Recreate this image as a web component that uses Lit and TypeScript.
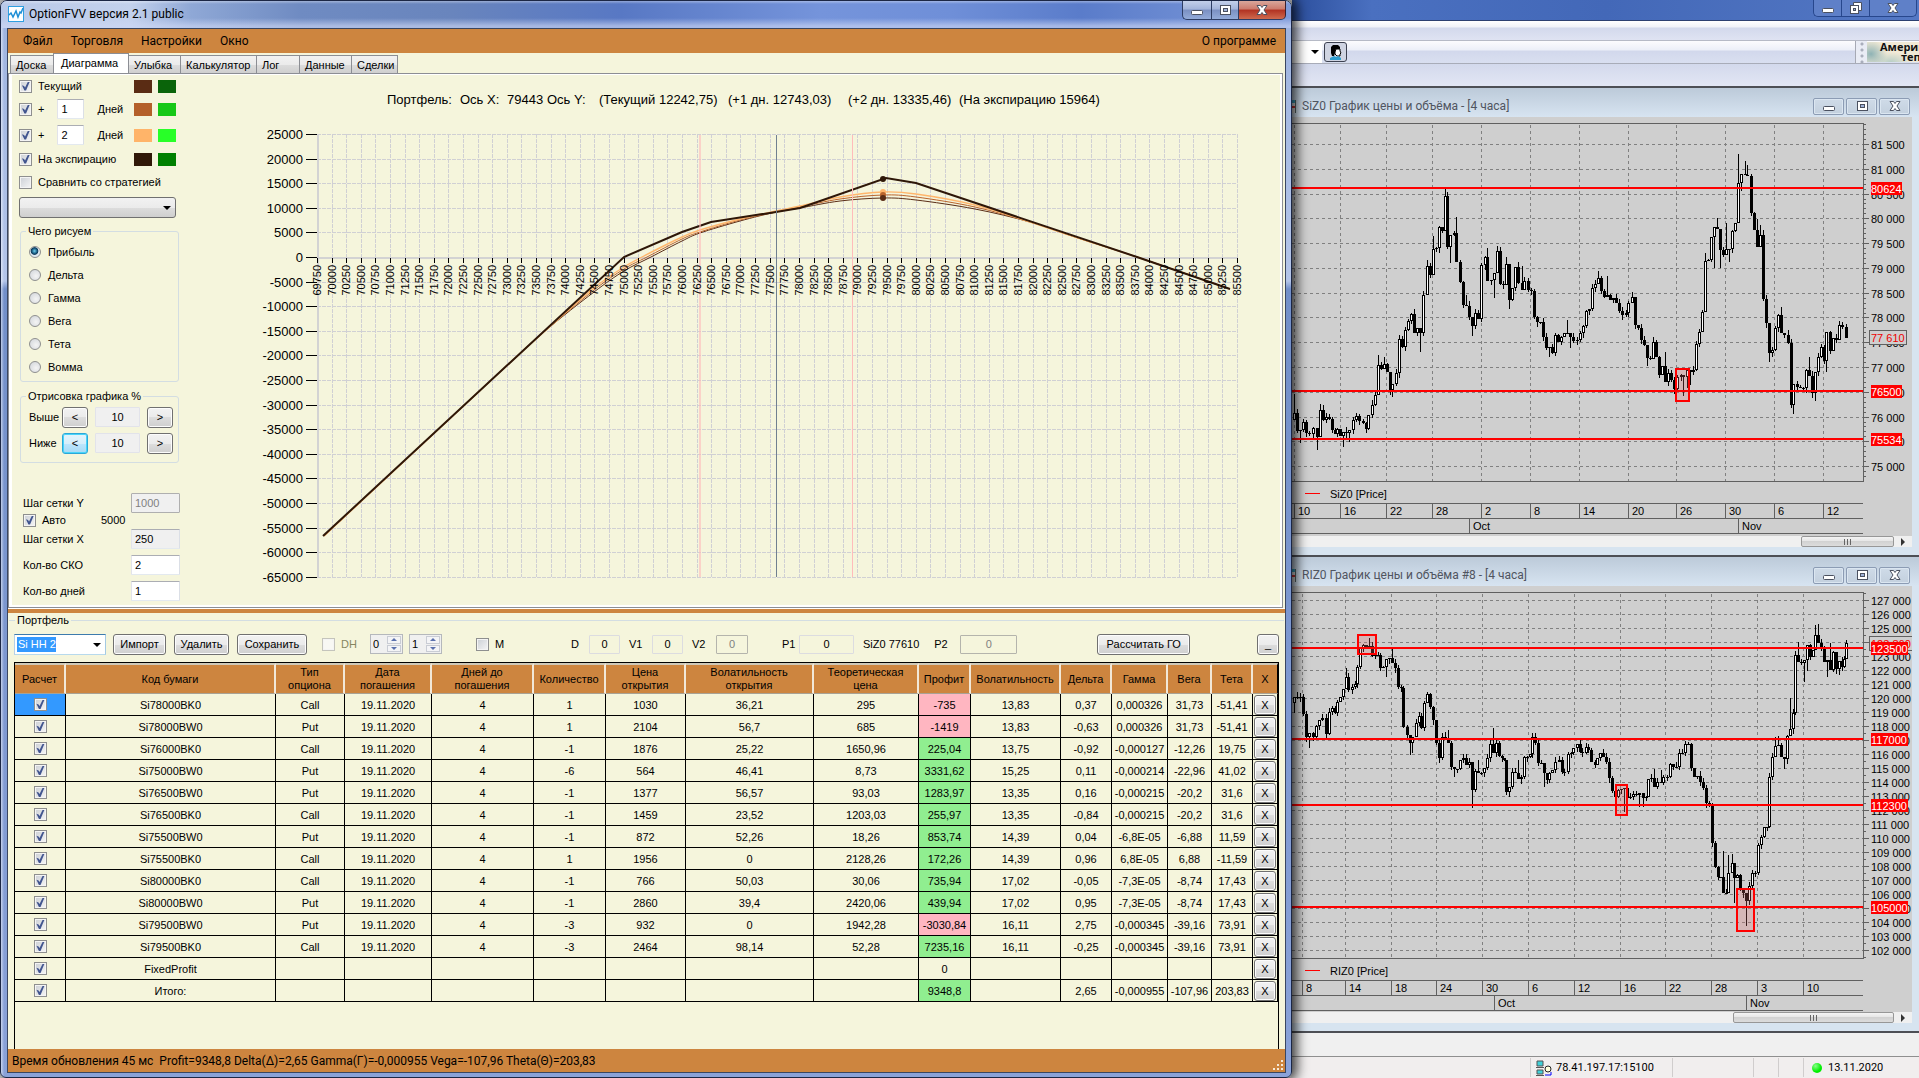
import { LitElement, html, svg, css, nothing } from "lit";
import { customElement, property } from "lit/decorators.js";
import { classMap } from "lit/directives/class-map.js";
import { styleMap } from "lit/directives/style-map.js";

const snap = (n: number) => Math.round(n) + 0.5;

/* Smooth path through a list of points (Catmull-Rom converted to Bezier). */
function smooth(points: number[][]): string {
  let d = `M${points[0][0]} ${points[0][1]}`;
  for (let i = 0; i < points.length - 1; i++) {
    const p0 = points[i - 1] ?? points[i];
    const p1 = points[i];
    const p2 = points[i + 1];
    const p3 = points[i + 2] ?? p2;
    d += `C${p1[0] + (p2[0] - p0[0]) / 6} ${p1[1] + (p2[1] - p0[1]) / 6} ${p2[0] - (p3[0] - p1[0]) / 6} ${p2[1] - (p3[1] - p1[1]) / 6} ${p2[0]} ${p2[1]}`;
  }
  return d;
}

/* ---------- profit diagram ---------- */

const TITLE: [number, string][] = [
  [387, "Портфель:"], [460, "Ось X:"], [507, "79443"], [547, "Ось Y:"],
  [599, "(Текущий 12242,75)"], [728, "(+1 дн. 12743,03)"], [848, "(+2 дн. 13335,46)"], [959, "(На экспирацию 15964)"],
];

@customElement("profit-chart")
export class ProfitChart extends LitElement {
  static styles = css`
    :host { display: block; }
    .plot { display: block; width: 100%; height: auto; font-family: "Liberation Sans", Arial, sans-serif; }
    .title { font-size: 13px; white-space: pre; }
    .ylab { font-size: 13px; text-anchor: end; }
    .xlab { font-size: 11px; text-anchor: end; }
    .grid { stroke: #d0d0d4; stroke-dasharray: 4 1; }
    .crisp { shape-rendering: crispEdges; }
    .curve { fill: none; }
  `;

  render() {
    const x = (p: number) => 317 + ((p - 69750) / 250) * 14.603;
    const y = (v: number) => 257 - (v / 5000) * 24.6;
    const values = Array.from({ length: 19 }, (_, i) => 25000 - i * 5000);
    const strikes = Array.from({ length: 64 }, (_, i) => 69750 + i * 250);
    const expiry = [[323, 536], [624, 257], [682, 232], [711, 222], [776, 212], [800, 208], [886, 178], [916, 183], [1137, 257], [1230, 289]];
    const start = [[324, 536], [500, 372], [545, 331]];
    const tail = [[1030, 222], [1075, 237], [1137, 257], [1230, 289]];
    const current = [...start, [594, 292], [624, 271], [651, 257], [682, 241], [700, 233], [740, 221], [776, 212], [800, 208], [840, 201], [883, 198], [916, 200], [975, 209], ...tail];
    const plus1 = [...start, [594, 290], [624, 269], [647, 257], [682, 239], [700, 232], [740, 220], [776, 212], [800, 207], [840, 199], [883, 195], [916, 197], [975, 207], ...tail];
    const plus2 = [...start, [594, 288], [624, 267], [642, 257], [682, 237], [700, 230], [740, 219], [776, 211], [800, 206], [840, 197], [883, 192], [916, 194], [975, 205], ...tail];
    return html`
      <svg class="plot" viewBox="192 75 1088 530" role="img" aria-label="Портфель">
        ${TITLE.map(([tx, t]) => svg`<text class="title" x=${tx} y="104">${t}</text>`)}
        <g class="crisp">
          ${values.map((v) => svg`<line class="grid" x1="317" x2="1237" y1=${snap(y(v))} y2=${snap(y(v))} />
            <line x1="306" x2="317" y1=${snap(y(v))} y2=${snap(y(v))} stroke="#000" />`)}
          ${strikes.map((p) => svg`<line class="grid" x1=${snap(x(p))} x2=${snap(x(p))} y1="134" y2="577" />`)}
          <rect x="317" y="134" width="2" height="444" fill="#d3d3d3" />
          <rect x="317" y="257" width="920" height="2" fill="#d3d3d3" />
        </g>
        ${values.map((v) => svg`<text class="ylab" x="303" y=${Math.round(y(v)) + 5}>${v}</text>`)}
        <path class="curve" d=${smooth(current)} stroke="#5a2d16" />
        <path class="curve" d=${smooth(plus1)} stroke="#b9642d" />
        <path class="curve" d=${smooth(plus2)} stroke="#ffb66c" stroke-width="1.4" />
        <polyline class="curve" points=${expiry.map((p) => p.join()).join(" ")} stroke="#2e1708" stroke-width="2" />
        <g class="crisp">
          <rect x="699" y="135" width="2" height="442" fill="#fbb" fill-opacity=".6" />
          <rect x="852" y="135" width="1" height="442" fill="#fbb" />
          <rect x="776" y="135" width="1" height="442" fill="#708090" />
          ${strikes.map((p) => svg`<line x1=${snap(x(p))} x2=${snap(x(p))} y1="258" y2="263" stroke="#000" />`)}
        </g>
        ${strikes.map((p) => svg`<text class="xlab" transform="translate(${Math.round(x(p)) + 4} 265) rotate(-90)">${p}</text>`)}
        <circle cx="883" cy="192" r="3" fill="#ffb66c" />
        <circle cx="883" cy="195" r="3" fill="#b9642d" />
        <circle cx="883" cy="198" r="3" fill="#5a2d16" />
        <circle cx="883" cy="179" r="3" fill="#2e1708" />
      </svg>
    `;
  }
}

/* ---------- price charts ---------- */

interface PriceSpec {
  name: string;
  view: [number, number, number, number];
  bottom: number;
  gridX: [number, string][];
  months: [number, string][];
  labels: [number, string][];
  minor: number;
  levels: [number, string][];
  tag: number;
  boxes: number[][];
  last: { y: number; width: number; text: string };
  origin: number;
  closes: number[];
  wicks: number[];
}

/* Candle tracks: pairs of (column, level); a column unit is 1/2.454 px, a level unit 1/3 px. */
const COL = 2.454;
const ROW = 3;

const SI: PriceSpec = {
  name: "SiZ0 [Price]",
  view: [1292, 117, 620, 419],
  bottom: 481,
  gridX: [[1294, "10"], [1340, "16"], [1386, "22"], [1432, "28"], [1481, "2"], [1530, "8"], [1579, "14"], [1628, "20"], [1676, "26"], [1725, "30"], [1774, "6"], [1823, "12"]],
  months: [[1469, "Oct"], [1738, "Nov"]],
  labels: Array.from({ length: 14 }, (_, i): [number, string] => {
    const v = 81500 - i * 500;
    return [144 + i * 24.78, `${Math.floor(v / 1000)} ${String(v % 1000).padStart(3, "0")}`];
  }),
  minor: 4.956,
  levels: [[188, "80624"], [391, "76500"], [439, "75534"]],
  tag: 31,
  boxes: [[1676, 369, 13, 32]],
  last: { y: 330, width: 37, text: "77 610" },
  origin: 0,
  closes: [
    35, 1240, 42, 1292, 50, 1290, 57, 1267, 65, 1298, 72, 1302, 80, 1285, 90, 1310, 97, 1230, 105, 1260, 112, 1252, 120, 1258, 127, 1290, 134, 1302, 141, 1288, 148, 1308, 155, 1295, 163, 1300, 170, 1290, 178, 1260, 186, 1248, 193, 1262, 203, 1268, 210, 1288, 217, 1245, 225, 1215, 232, 1185, 240, 1095, 247, 1108, 254, 1092, 262, 1115, 269, 1170, 276, 1152, 284, 1120, 291, 1018, 299, 1040, 306, 990, 314, 962, 321, 943, 329, 998, 336, 985, 344, 1000, 352, 885, 360, 798, 367, 825, 375, 748, 382, 745, 390, 680, 397, 692, 404, 588, 411, 742, 418, 705, 426, 700, 433, 785, 441, 845, 448, 915, 456, 918, 464, 950, 471, 978, 479, 938, 487, 958, 494, 795, 502, 772, 509, 842, 517, 840, 524, 818, 532, 752, 540, 852, 547, 856, 554, 792, 562, 900, 569, 865, 577, 800, 585, 850, 593, 870, 600, 842, 608, 870, 616, 872, 623, 950, 630, 967, 638, 967, 645, 1010, 652, 1045, 660, 1040, 667, 1058, 675, 1005, 683, 1025, 690, 1010, 698, 1000, 705, 998, 712, 1010, 720, 1022, 728, 1020, 735, 1000, 743, 978, 750, 932, 758, 928, 765, 865, 773, 852, 780, 835, 788, 872, 795, 892, 803, 885, 810, 900, 818, 895, 825, 908, 833, 932, 840, 945, 848, 938, 855, 908, 863, 892, 870, 975, 878, 985, 886, 1020, 893, 1035, 900, 1075, 908, 1078, 915, 1025, 922, 1070, 930, 1125, 937, 1098, 945, 1145, 952, 1120, 960, 1140, 967, 1168, 975, 1132, 983, 1125, 990, 1132, 998, 1110, 1005, 1115, 1013, 1110, 1020, 1032, 1028, 995, 1035, 935, 1042, 782, 1050, 780, 1057, 712, 1065, 680, 1072, 688, 1079, 750, 1087, 765, 1094, 748, 1102, 748, 1109, 692, 1117, 668, 1125, 548, 1132, 522, 1140, 525, 1147, 528, 1155, 640, 1162, 690, 1170, 742, 1178, 705, 1185, 898, 1192, 970, 1200, 1060, 1207, 1050, 1215, 985, 1222, 945, 1230, 1000, 1238, 1005, 1246, 1030, 1253, 1215, 1260, 1152, 1268, 1162, 1276, 1165, 1284, 1165, 1291, 1110, 1299, 1128, 1306, 1180, 1313, 1115, 1320, 1070, 1327, 1040, 1334, 1082, 1341, 995, 1349, 1052, 1356, 1015, 1364, 1020, 1372, 975, 1380, 980, 1388, 1015,
  ],
  wicks: [35, 1182, 50, 1330, 90, 1350, 97, 1212, 155, 1340, 170, 1325, 240, 1065, 254, 1072, 269, 1185, 276, 1190, 344, 1055, 329, 928, 360, 780, 375, 708, 404, 565, 418, 788, 433, 652, 456, 885, 471, 1007, 509, 745, 524, 893, 532, 738, 554, 770, 562, 928, 593, 798, 660, 1070, 705, 960, 712, 1045, 780, 812, 803, 828, 863, 877, 900, 1097, 915, 1010, 945, 1055, 990, 1188, 998, 1165, 1005, 1155, 1042, 760, 1065, 805, 1072, 655, 1079, 805, 1094, 670, 1102, 785, 1125, 462, 1132, 572, 1140, 482, 1147, 495, 1170, 658, 1178, 675, 1200, 1085, 1230, 922, 1260, 1242, 1299, 1070, 1313, 1202, 1341, 1115],
};

const RI: PriceSpec = {
  name: "RIZ0 [Price]",
  view: [1292, 586, 620, 426],
  bottom: 958,
  gridX: [[1302, "8"], [1345, "14"], [1391, "18"], [1436, "24"], [1482, "30"], [1528, "6"], [1574, "12"], [1620, "16"], [1665, "22"], [1711, "28"], [1757, "3"], [1803, "10"]],
  months: [[1494, "Oct"], [1746, "Nov"]],
  labels: Array.from({ length: 26 }, (_, i): [number, string] => [599.5 + i * 14, `${127 - i} 000`]),
  minor: 7,
  levels: [[648, "123500"], [739, "117000"], [805, "112300"], [907, "105000"]],
  tag: 37,
  boxes: [[1358, 635, 18, 19], [1616, 785, 11, 30], [1737, 889, 17, 42]],
  last: { y: 636, width: 44, text: "123 860" },
  origin: 580,
  closes: [
    35, 350, 42, 350, 50, 352, 57, 402, 64, 472, 72, 460, 80, 470, 88, 438, 96, 420, 104, 415, 112, 463, 120, 395, 127, 385, 134, 400, 140, 365, 147, 352, 154, 328, 161, 292, 168, 330, 176, 322, 183, 312, 190, 262, 197, 205, 204, 195, 211, 200, 218, 198, 225, 228, 232, 225, 240, 225, 246, 265, 253, 262, 260, 238, 267, 235, 275, 250, 283, 265, 290, 322, 297, 325, 303, 440, 311, 465, 318, 490, 325, 470, 333, 430, 340, 408, 347, 445, 354, 370, 361, 342, 368, 380, 376, 420, 383, 488, 390, 535, 398, 470, 405, 480, 412, 490, 420, 560, 428, 568, 435, 568, 442, 540, 450, 535, 457, 555, 464, 545, 471, 630, 478, 572, 486, 580, 494, 578, 501, 565, 508, 535, 515, 492, 523, 520, 530, 488, 537, 528, 544, 535, 550, 540, 555, 635, 562, 620, 570, 575, 577, 580, 584, 598, 592, 590, 598, 532, 606, 530, 613, 522, 618, 472, 625, 490, 632, 548, 640, 550, 647, 580, 654, 600, 661, 578, 668, 570, 676, 545, 684, 540, 691, 575, 698, 575, 706, 522, 713, 520, 720, 505, 728, 492, 735, 515, 742, 520, 750, 500, 757, 510, 764, 545, 772, 555, 779, 535, 786, 520, 793, 530, 800, 545, 807, 595, 814, 632, 822, 650, 829, 630, 836, 628, 844, 625, 852, 655, 860, 650, 867, 642, 874, 645, 882, 640, 890, 655, 897, 650, 904, 598, 911, 595, 918, 620, 926, 605, 934, 610, 941, 590, 949, 590, 956, 552, 964, 560, 971, 560, 978, 520, 986, 518, 994, 492, 1001, 492, 1008, 565, 1016, 590, 1024, 588, 1031, 605, 1038, 625, 1046, 670, 1053, 675, 1060, 788, 1067, 860, 1074, 890, 1080, 890, 1087, 938, 1094, 938, 1100, 880, 1108, 850, 1115, 895, 1122, 885, 1129, 925, 1137, 940, 1144, 962, 1152, 918, 1159, 880, 1166, 880, 1172, 795, 1180, 770, 1187, 742, 1194, 742, 1200, 592, 1207, 532, 1214, 498, 1222, 495, 1229, 530, 1237, 538, 1245, 468, 1252, 448, 1259, 400, 1265, 225, 1272, 245, 1279, 250, 1287, 240, 1293, 195, 1300, 230, 1307, 210, 1314, 165, 1321, 188, 1328, 205, 1336, 245, 1343, 240, 1350, 270, 1357, 215, 1364, 268, 1371, 242, 1378, 260, 1385, 238, 1390, 190,
  ],
  wicks: [35, 400, 72, 505, 161, 265, 218, 175, 275, 205, 260, 290, 318, 525, 325, 520, 405, 455, 412, 450, 428, 592, 471, 683, 486, 540, 523, 445, 562, 650, 584, 540, 647, 620, 654, 612, 844, 697, 882, 680, 890, 680, 918, 568, 934, 570, 1087, 812, 1100, 825, 1108, 822, 1115, 970, 1144, 1037, 1214, 472, 1222, 468, 1237, 567, 1252, 355, 1272, 185, 1287, 305, 1293, 272, 1314, 135, 1321, 132, 1343, 290, 1350, 190, 1371, 285, 1390, 180],
};

@customElement("price-chart")
export class PriceChart extends LitElement {
  @property({ attribute: false }) spec: PriceSpec = SI;

  static styles = css`
    :host { display: block; }
    .plot { display: block; width: 100%; height: auto; background: #cfcfcf; font: 11px "Liberation Sans", Arial, sans-serif; shape-rendering: crispEdges; }
    .dash { stroke: #808080; stroke-dasharray: 3 3; }
    .axis { stroke: #606060; }
    .level { fill: #f00; }
    .tagtext { fill: #fff; }
    .lasttext { fill: #e00; }
    .box { fill: rgba(230, 110, 110, .25); stroke: #f00; stroke-width: 2; }
  `;

  private candles() {
    const { closes, wicks, origin } = this.spec;
    const extra = new Map<number, number>();
    for (let i = 0; i < wicks.length; i += 2) extra.set(wicks[i], wicks[i + 1]);
    const out = [];
    let open = closes[1] + 20;
    for (let i = 0; i < closes.length; i += 2) {
      const col = closes[i];
      const close = closes[i + 1];
      const cx = Math.round(1280 + col / COL);
      const e = extra.get(col);
      const high = Math.min(open, close);
      const low = Math.max(open, close);
      const up = e !== undefined ? Math.min(high, e) : high - ((i * 7) % 16);
      const down = e !== undefined ? Math.max(low, e) : low + ((i * 11) % 15);
      const top = Math.round(origin + high / ROW);
      const h = Math.max(1, Math.round(origin + low / ROW) - top);
      const y1 = Math.round(origin + up / ROW);
      const y2 = Math.round(origin + down / ROW);
      out.push(svg`<rect x=${cx} y=${y1} width="1" height=${y2 - y1} /><rect x=${cx - 1} y=${top} width="3" height=${h} />`);
      if (close < open && h > 2) out.push(svg`<rect x=${cx} y=${top + 1} width="1" height=${h - 2} fill="#fff" />`);
      open = close;
    }
    return out;
  }

  render() {
    const s = this.spec;
    const [, vy] = s.view;
    const right = 1863;
    const top = vy + 6;
    const d = s.bottom + 22;
    const ticks: number[] = [];
    for (let y = s.labels[0][0] - s.minor * 4; y < s.bottom; y += s.minor) if (y > top) ticks.push(y);
    return html`
      <svg class="plot" viewBox=${s.view.join(" ")} role="img" aria-label=${s.name}>
        ${s.gridX.map(([x]) => svg`<line class="dash" x1=${x + 0.5} x2=${x + 0.5} y1=${top + 2} y2=${s.bottom} />`)}
        ${s.labels.map(([y]) => svg`<line class="dash" x1="1292" x2=${right} y1=${snap(y)} y2=${snap(y)} /><line class="axis" x1=${right} x2=${right + 6} y1=${snap(y)} y2=${snap(y)} />`)}
        ${ticks.map((y) => svg`<line class="axis" x1=${right} x2=${right + 3} y1=${snap(y)} y2=${snap(y)} />`)}
        <path class="axis" fill="none" d=${`M1292 ${top + 0.5}H${right + 0.5}V${s.bottom + 0.5}H1292`} />
        ${this.candles()}
        ${s.boxes.map(([x, y, w, h]) => svg`<rect class="box" x=${x} y=${y} width=${w} height=${h} />`)}
        ${s.labels.map(([y, t]) => svg`<text x="1871" y=${Math.round(y) + 5}>${t}</text>`)}
        <rect x="1869.5" y=${s.last.y + 0.5} width=${s.last.width} height="14" fill="#cfcfcf" stroke="#606060" />
        <text class="lasttext" x="1871" y=${s.last.y + 12}>${s.last.text}</text>
        ${s.levels.map(([y, t]) => svg`<rect class="level" x="1292" y=${y - 1} width=${right - 1292} height="2" />
          <rect class="level" x="1871" y=${y - 6} width=${s.tag} height="13" /><text class="tagtext" x="1871" y=${y + 5}>${t}</text>`)}
        <rect class="level" x="1305" y=${s.bottom + 12} width="15" height="1" />
        <text x="1330" y=${s.bottom + 17}>${s.name}</text>
        ${[0, 15, 30].map((o) => svg`<line class="axis" x1="1292" x2=${right} y1=${d + o + 0.5} y2=${d + o + 0.5} />`)}
        ${s.gridX.map(([x, t]) => svg`<line class="axis" x1=${x + 0.5} x2=${x + 0.5} y1=${d} y2=${d + 15} /><text x=${x + 4} y=${d + 12}>${t}</text>`)}
        ${s.months.map(([x, t]) => svg`<line class="axis" x1=${x + 0.5} x2=${x + 0.5} y1=${d + 15} y2=${d + 30} /><text x=${x + 4} y=${d + 27}>${t}</text>`)}
      </svg>
    `;
  }
}

/* ---------- caption buttons ---------- */

@customElement("caption-buttons")
export class CaptionButtons extends LitElement {
  @property() kind: "active" | "idle" | "mdi" = "active";

  static styles = css`
    :host { display: flex; }
    .b { box-sizing: border-box; display: grid; place-items: center; padding: 0; margin: 0; border: 1px solid #2e3d63; background: linear-gradient(#c3d0ea, #a3b4da 45%, #7b90c2 50%, #93abd9); }
    .active, .idle { display: flex; }
    .active .b { height: 19px; border-top: 0; border-right: 0; width: 27px; }
    .active .b:first-child { border-radius: 0 0 0 5px; width: 29px; }
    .active .b:last-child { width: 48px; border-right: 1px solid #3a2030; border-radius: 0 0 5px 0; background: linear-gradient(#d9a79b, #cc7a6c 45%, #b13222 50%, #cf6a4e); }
    .idle .b { height: 17px; border-color: #27478d; border-top: 0; border-right: 0; width: 28px; background: #5f80c8; }
    .idle .b:first-child { border-radius: 0 0 0 5px; }
    .idle .b:last-child { width: 48px; border-right: 1px solid #27478d; border-radius: 0 0 5px 0; }
    .mdi { display: flex; gap: 2px; }
    .mdi .b { width: 31px; height: 17px; border: 1px solid #8c9cb4; border-radius: 2px; background: linear-gradient(#cfdbe8, #c3d0de); box-shadow: inset 0 0 0 1px #dbe6f1; }
    .g { display: block; width: 14px; height: 12px; }
  `;

  render() {
    const ink = "#4b5160";
    const restore = this.kind === "idle";
    return html`
      <div class=${this.kind}>
        <button class="b" aria-label="Свернуть"><svg class="g" viewBox="0 0 14 12"><rect x="1.500" y="6.500" width="11" height="4" rx="1" fill="#fff" stroke=${ink} /></svg></button>
        <button class="b" aria-label="Развернуть"><svg class="g" viewBox="0 0 14 12">
          ${restore ? svg`<path d="M4.500 .5h8v8h-8z" fill="#fff" stroke=${ink} />` : nothing}
          <rect x=${restore ? 1.5 : 2.5} y=${restore ? 3.5 : 1.5} width=${restore ? 8 : 10} height=${restore ? 8 : 9} fill="#fff" stroke=${ink} />
          <rect x=${restore ? 4.5 : 5.5} y=${restore ? 6.5 : 4.5} width=${restore ? 2 : 4} height=${restore ? 2 : 3} fill="#9fb2d8" stroke=${ink} />
        </svg></button>
        <button class="b" aria-label="Закрыть"><svg class="g" viewBox="0 0 14 12">
          <path d="M2 1.500h3.500l1.500 2 1.500-2H12L9 6l3 4.500H8.500L7 8.500l-1.500 2H2L5 6z" fill="#fff" stroke=${ink} />
        </svg></button>
      </div>
    `;
  }
}

/* ---------- portfolio data ---------- */

const COLUMNS: [string, number | null][] = [
  ["Расчет", 51], ["Код бумаги", null], ["Тип опциона", 69], ["Дата погашения", 87], ["Дней до погашения", 102], ["Количество", 72],
  ["Цена открытия", 80], ["Волатильность открытия", 128], ["Теоретическая цена", 105], ["Профит", 52], ["Волатильность", 90],
  ["Дельта", 51], ["Гамма", 56], ["Вега", 44], ["Тета", 41], ["X", 25],
];

const EXP = "19.11.2020";
const ROWS: string[][] = [
  ["Si78000BK0", "Call", EXP, "4", "1", "1030", "36,21", "295", "-735", "13,83", "0,37", "0,000326", "31,73", "-51,41"],
  ["Si78000BW0", "Put", EXP, "4", "1", "2104", "56,7", "685", "-1419", "13,83", "-0,63", "0,000326", "31,73", "-51,41"],
  ["Si76000BK0", "Call", EXP, "4", "-1", "1876", "25,22", "1650,96", "225,04", "13,75", "-0,92", "-0,000127", "-12,26", "19,75"],
  ["Si75000BW0", "Put", EXP, "4", "-6", "564", "46,41", "8,73", "3331,62", "15,25", "0,11", "-0,000214", "-22,96", "41,02"],
  ["Si76500BW0", "Put", EXP, "4", "-1", "1377", "56,57", "93,03", "1283,97", "13,35", "0,16", "-0,000215", "-20,2", "31,6"],
  ["Si76500BK0", "Call", EXP, "4", "-1", "1459", "23,52", "1203,03", "255,97", "13,35", "-0,84", "-0,000215", "-20,2", "31,6"],
  ["Si75500BW0", "Put", EXP, "4", "-1", "872", "52,26", "18,26", "853,74", "14,39", "0,04", "-6,8E-05", "-6,88", "11,59"],
  ["Si75500BK0", "Call", EXP, "4", "1", "1956", "0", "2128,26", "172,26", "14,39", "0,96", "6,8E-05", "6,88", "-11,59"],
  ["Si80000BK0", "Call", EXP, "4", "-1", "766", "50,03", "30,06", "735,94", "17,02", "-0,05", "-7,3E-05", "-8,74", "17,43"],
  ["Si80000BW0", "Put", EXP, "4", "-1", "2860", "39,4", "2420,06", "439,94", "17,02", "0,95", "-7,3E-05", "-8,74", "17,43"],
  ["Si79500BW0", "Put", EXP, "4", "-3", "932", "0", "1942,28", "-3030,84", "16,11", "2,75", "-0,000345", "-39,16", "73,91"],
  ["Si79500BK0", "Call", EXP, "4", "-3", "2464", "98,14", "52,28", "7235,16", "16,11", "-0,25", "-0,000345", "-39,16", "73,91"],
  ["FixedProfit", "", "", "", "", "", "", "", "0", "", "", "", "", ""],
  ["Итого:", "", "", "", "", "", "", "", "9348,8", "", "2,65", "-0,000955", "-107,96", "203,83"],
];

const SERIES = [
  { label: "Текущий", colors: ["#5a2c14", "#0a640a"] },
  { days: "1", colors: ["#b4602a", "#17c817"] },
  { days: "2", colors: ["#ffb469", "#28ff28"] },
  { label: "На экспирацию", colors: ["#301808", "#008000"] },
];

const TABS = [["Доска", 43], ["Диаграмма", 76], ["Улыбка", 51], ["Калькулятор", 76], ["Лог", 43], ["Данные", 52], ["Сделки", 47]] as const;

@customElement("app-root")
export class AppRoot extends LitElement {
  static styles = css`
    :host { display: block; font: 11px/14px "Liberation Sans", Arial, sans-serif; color: #000; }
    * { box-sizing: border-box; }
    button, input, select { font: inherit; color: inherit; margin: 0; }
    .desktop { display: grid; grid-template-columns: 1292fr 627fr; min-height: 100vh; background: #f0f0f0; overflow: hidden; }
    .ui { font-family: Roboto, "Open Sans", "Noto Sans", sans-serif; font-size: 12px; }

    /* foreground window */
    .window { display: flex; flex-direction: column; z-index: 1; min-width: 0; border: 1px solid #1c2745; border-radius: 7px 7px 6px 6px; padding: 0 5px 4px 6px; box-shadow: 2px 0 12px 3px rgba(0, 0, 0, .75);
      background: linear-gradient(90deg, rgba(255,255,255,.55) 0, rgba(255,255,255,0) 3px) , linear-gradient(#9db3df 0, #b4c5e9 280px, #728fc9 288px, #8aa2d8 100%); }
    .caption { display: flex; align-items: flex-start; height: 27px; margin: 0 -5px 0 -6px; padding: 0 5px 0 7px; border-radius: 6px 6px 0 0;
      background: linear-gradient(rgba(255,255,255,.35) 0, rgba(255,255,255,0) 3px, rgba(255,255,255,0) 17px, rgba(205,215,245,.65) 25px), linear-gradient(90deg, #b9c9e8 0, #c3d1ec 130px, #8fa8d6 190px, #6f8bc2 300px, #6985bd 450px, #5878c4 620px, #7594db 820px, #6f8fd8 950px, #5a7cca 1080px, #7f9bda 100%); }
    .logo { width: 16px; height: 16px; margin-top: 5px; }
    .name { flex: 1; margin: 0; padding: 4px 5px 0; font-weight: 400; line-height: 18px; }
    .client { flex: 1; display: flex; flex-direction: column; border: 1px solid #3a4660; background: #f5f5dc; }
    .menu { display: flex; align-items: center; height: 24px; padding: 0 9px 0 15px; gap: 18px; background: #cd853f; }
    .mi { color: #000; text-decoration: none; line-height: 20px; }
    .push { margin-left: auto; }
    .tabs { display: flex; align-items: flex-end; height: 20px; padding-left: 2px; }
    .tab { height: 18px; padding: 0 0 0 5px; text-align: left; border: 1px solid #8c8e94; border-bottom: 0; border-right-width: 0; background: linear-gradient(#f2f2f2, #ebebeb 50%, #dddddd 50%, #cfcfcf); white-space: nowrap; }
    .tab:last-child { border-right-width: 1px; }
    .tab.on { height: 21px; margin-bottom: -1px; padding: 0 0 3px 7px; background: #fff; border-right-width: 1px; }
    .tab.on + .tab { border-left-width: 0; }
    .page { display: grid; grid-template-columns: 180px 1fr; margin-right: 2px; border: 1px solid #8c8e94; outline: 0; background: #f5f5dc; box-shadow: inset 3px 1px #fff, inset -2px -2px #fff; padding: 1px 2px 2px 3px; }
    .split { height: 5px; border-top: 1px solid #fff; background: #cd853f; }

    /* sidebar */
    .side { display: flex; flex-direction: column; padding-left: 7px; }
    .row { display: flex; align-items: center; height: 24px; }
    .row.first { height: 22px; }
    .row.third { height: 28px; }
    .row.fourth { height: 20px; }
    .row.cmp { height: 26px; }
    .check { display: flex; align-items: center; gap: 6px; white-space: nowrap; }
    .cb { appearance: none; flex: none; width: 13px; height: 13px; border: 1px solid #8e8f8f; background: linear-gradient(135deg, #cbcfd5, #f6f6f6); box-shadow: inset 0 0 0 1px #f4f4f4; display: grid; place-items: center; }
    .cb:checked::before { content: ""; width: 9px; height: 9px; background: #41558f; clip-path: polygon(10% 42%, 34% 50%, 45% 66%, 78% 0, 98% 0, 56% 100%, 38% 100%); }
    .cb:disabled { border-color: #c4c4bc; background: #f8f8f4; }
    .txt { height: 20px; padding: 0 3px; border: 1px solid; border-color: #abadb3 #dbdfe6 #e3e9ef #e2e3ea; border-radius: 1px; background: #fff; min-width: 0; }
    .txt.days { width: 27px; margin-left: 13px; }
    .txt.ro { background: #f0f0f0; }
    .txt.off { background: #f0f0f0; color: #808080; border-color: #afafaf; }
    .unit { flex: 1; padding-left: 13px; }
    .fill { flex: 1; }
    .sws { display: flex; gap: 6px; margin-right: 16px; }
    .sw { width: 18px; height: 13px; }
    .drop { appearance: none; border: 1px solid #707070; border-radius: 3px; background: linear-gradient(#f2f2f2, #ebebeb 50%, #dddddd 50%, #cfcfcf); }
    .dropwrap { position: relative; display: grid; }
    .dropwrap::after { content: ""; position: absolute; right: 5px; top: 9px; border: 4px solid transparent; border-top-color: #000; border-bottom: 0; pointer-events: none; }
    .dropwrap.strategy { margin: 2px 16px 0 0; height: 21px; }
    .group { margin: 6px 13px 0 1px; padding: 2px 8px 3px; border: 1px solid #d3dde2; border-radius: 3px; min-width: 0; }
    .group.limits { margin-top: 7px; padding: 3px 5px 8px 8px; display: grid; gap: 4px; }
    .legend { padding: 0 2px; margin-left: -3px; height: 14px; }
    .radio { display: flex; align-items: center; gap: 7px; height: 23px; }
    .rb { appearance: none; width: 12px; height: 12px; border-radius: 50%; border: 1px solid #8e8f8f; background: radial-gradient(circle at 60% 60%, #f4f4f4, #cfd3d8); }
    .rb:checked { background: radial-gradient(circle at 45% 40%, #6fd0ee 0, #1b5f86 30%, #0e3a5a 42%, #dfe9f0 52%); }
    .lim { display: flex; align-items: center; height: 22px; }
    .limname { width: 33px; }
    .btn { height: 21px; padding: 0; border: 1px solid #707070; border-radius: 3px; background: linear-gradient(#f2f2f2, #ebebeb 50%, #dddddd 50%, #cfcfcf); box-shadow: inset 0 0 0 1px #fcfcfc; white-space: nowrap; }
    .btn.arrow { width: 26px; }
    .btn.hot { border-color: #2ba8d8; background: linear-gradient(#e3f4fc, #d6eefb 50%, #bee6fd 50%, #a7d9f5); box-shadow: inset 0 0 0 1px #48d4fa; }
    .lim .txt { width: 45px; margin: 0 7px; text-align: center; border-color: #e2e3ea; }
    .step { display: flex; align-items: center; justify-content: space-between; height: 20px; margin: 6px 12px 0 4px; }
    .step.y { margin-top: 30px; }
    .step.x { margin-top: 2px; }
    .step .txt { width: 49px; }
    .auto { display: flex; height: 14px; align-items: center; margin-left: 4px; }
    .autoval { margin-left: 35px; }

    /* portfolio */
    .folio { flex: 1; display: flex; flex-direction: column; margin: 0 1px; padding: 0 5px; border: 0; min-width: 0; }
    .cap { display: flex; align-items: center; gap: 2px; height: 14px; margin: 0 -5px; }
    .cap::before { content: ""; width: 6px; border-top: 1px solid #d3dde2; }
    .cap::after { content: ""; flex: 1; border-top: 1px solid #d3dde2; }
    .bar { display: flex; align-items: center; height: 22px; margin-top: 6px; white-space: nowrap; }
    .dropwrap.port { width: 92px; height: 21px; margin-right: 7px; }
    .portsel { appearance: none; padding: 0 3px; border: 1px solid #7da2ce; border-color: #3d7bad #a4c9e3 #b7d9ed #b5cfe7; color: #fff; background: linear-gradient(#3399ff, #3399ff) 2px 2px / 39px 15px no-repeat #fff; }
    .portsel option { color: #000; }
    .w53 { width: 53px; margin-right: 8px; }
    .w55 { width: 55px; margin-right: 8px; }
    .w70 { width: 70px; margin-right: 15px; }
    .dh { color: #85855f; width: 48px; }
    .spin { display: flex; width: 33px; height: 20px; margin-right: 6px; border: 1px solid #b5b8bc; background: #f0f0f0; }
    .spin .num { appearance: textfield; width: 15px; padding: 0 2px; border: 0; background: transparent; }
    .num::-webkit-inner-spin-button { display: none; }
    .arrows { flex: 1; display: grid; gap: 1px; padding: 1px; }
    .ar { display: grid; place-items: center; padding: 0; border: 1px solid #c9ccd4; background: #f4f4f6; }
    .ar::before { content: ""; border: 3px solid transparent; border-bottom-color: #5a70ad; border-top: 0; }
    .ar.dn::before { border: 3px solid transparent; border-top-color: #5a70ad; border-bottom: 0; }
    .m { margin-left: 28px; width: 95px; }
    .greek { display: flex; align-items: center; justify-content: space-between; margin-right: 9px; }
    .greek .txt { text-align: center; background: #f5f5dc; height: 19px; border-color: #dcdce0; }
    .greek .txt.off { border-color: #b4b4ac; }
    .g49 { width: 49px; } .g49 .txt { width: 31px; }
    .g54 { width: 54px; } .g54 .txt { width: 31px; }
    .g56 { width: 56px; margin-right: 34px; } .g56 .txt { width: 32px; }
    .g72 { width: 72px; } .g72 .txt { width: 55px; }
    .g83 { width: 83px; margin: 0 80px 0 15px; } .g83 .txt { width: 57px; }
    .calc { width: 93px; }
    .min { width: 22px; margin-left: auto; }
    .grid { flex: 1; margin-top: 7px; border: 1px solid #000; border-bottom: 0; min-height: 320px; }
    .table { width: 100%; table-layout: fixed; border-collapse: separate; border-spacing: 0; text-align: center; }
    .th { height: 31px; padding: 0 3px; font-weight: 400; line-height: 13px; background: #cd853f; border-top: 2px solid #cfc9b8; border-bottom: 1px solid #a8a294; border-right: 2px solid #f2e8d8; }
    .th:last-child { border-right: 1px solid #000; }
    .td { height: 22px; padding: 0; border-right: 1px solid #000; border-bottom: 1px solid #000; white-space: nowrap; }
    .td .cb { margin: 0 auto; }
    .sel { background: #3399ff; }
    .loss { background: #ffb6c1; }
    .gain { background: #90ee90; }
    .del { display: block; width: 22px; height: 20px; margin: 0 auto; }
    .status { display: flex; align-items: center; justify-content: space-between; height: 23px; padding: 0 2px 0 4px; background: #cd853f; white-space: pre; }
    .sizer { width: 10px; height: 10px; align-self: flex-end; margin-bottom: 2px; }

    /* background terminal */
    .terminal { display: flex; flex-direction: column; min-width: 0; overflow: hidden; background: #f0f0f0; }
    .tcap { display: flex; justify-content: flex-end; height: 21px; padding-right: 2px; border-bottom: 1px solid #2c4070; background: linear-gradient(90deg, #2c4f9d 0, #4a70c0 80px, #4368b8 50%, #5478c4 100%); }
    .strip { height: 20px; border-bottom: 1px solid #b6bac6; background: linear-gradient(#fff 0, #f0f2f8 6px, #d3d9ec 7px, #dfe3f2 100%); }
    .tools { display: flex; height: 23px; border-bottom: 1px solid #a8acb8; background: linear-gradient(#fcfcfe 0, #eceff8 9px, #d2d8ec 10px, #d9dff0 100%); }
    .dropwrap.acct { width: 30px; height: 22px; }
    .dropwrap.acct::after { right: 3px; }
    .acctsel { appearance: none; border: 0; background: #fff; }
    .head { width: 23px; height: 20px; margin: 1px 0 0 2px; padding: 0; border: 1px solid #3c4150; border-radius: 3px; background: #cfd4e2; display: grid; place-items: center; }
    .grip { margin-left: auto; width: 12px; border-left: 1px solid #a6a9b4; background: radial-gradient(circle, #a9aebc 1px, transparent 2px) 3px 0 / 6px 6px repeat-y #e9ecf5; }
    .banner { width: 52px; margin: 1px 0; overflow: hidden; padding-left: 13px; white-space: nowrap; font: 700 11px/10px "Open Sans", "Noto Sans", sans-serif; color: #111;
      background: radial-gradient(ellipse 16px 14px at 4px 12px, #8fb3b5, transparent), radial-gradient(ellipse 20px 10px at 24px 20px, #b9cfc6, transparent), #f2ead6; text-decoration: none; }
    .b2 { display: block; padding-left: 21px; }
    .strip2 { height: 22px; background: linear-gradient(#d3d9ec, #e2e6f4); }
    .mdi { display: flex; flex-direction: column; padding-right: 7px; border-top: 2px solid #4d4f55; background: #d7e4f0; padding-bottom: 8px; }
    .mcap { display: flex; align-items: center; height: 29px; margin-right: -7px; padding: 7px 9px 0 0; background: linear-gradient(#bccad9, #d7e4f1); color: #505560; }
    .mic { width: 4px; height: 13px; border-right: 1px solid #566; background: linear-gradient(#3aa3c4 3px, #e6e6e6 3px, #e6e6e6 6px, #c33 6px, #c33 8px, #ddd 8px); }
    .mname { flex: 1; padding-left: 6px; white-space: nowrap; }
    .scroll { display: flex; align-items: center; height: 11px; background: #f0f0f0; justify-content: flex-end; }
    .thumb { height: 11px; border: 1px solid #979797; border-radius: 2px; background: linear-gradient(#f4f4f4, #e6e6e6 45%, #d2d2d2 50%, #dcdcdc); display: flex; justify-content: center; align-items: center; gap: 2px; }
    .thumb.t1 { width: 15%; }
    .thumb.t2 { width: 26%; }
    .rib { width: 1px; height: 6px; background: #666; }
    .sar { width: 18px; display: grid; place-items: center; }
    .sar::before { content: ""; border: 4px solid transparent; border-left-color: #333; border-right: 0; }
    .foot { flex: 1; border-top: 2px solid #4d4f55; min-height: 24px; }
    .tstat { display: grid; grid-template-columns: 239fr 142fr 81fr 25fr 25fr 115fr; height: 22px; border-top: 1px solid #8f8f8f; background: #f1eeee; align-items: center; }
    .seg { display: flex; align-items: center; height: 19px; border-right: 1px solid #d0cdcd; padding-left: 5px; gap: 4px; min-width: 0; overflow: hidden; }
    .seg.void { padding: 0; }
    .seg.date { border-right: 0; gap: 6px; padding-left: 8px; }
    .ico { width: 16px; height: 16px; flex: none; }
    .dot { width: 10px; height: 10px; border-radius: 50%; background: radial-gradient(circle at 35% 30%, #8f8, #0e0 60%); }
    .net { font-size: 11px; }
  `;

  private swatches(colors: string[]) {
    return html`<span class="sws">${colors.map((c) => html`<span class="sw" style=${styleMap({ background: c })}></span>`)}</span>`;
  }

  private sidebar() {
    const cls = ["first", "second", "third", "fourth"];
    return html`
      <div class="side">
        ${SERIES.map((s, i) => html`
          <div class="row ${cls[i]}">
            <label class="check"><input class="cb" type="checkbox" checked />${s.label ?? "+"}</label>
            ${s.days
              ? html`<input class="txt days" aria-label="Дней ${s.days}" .value=${s.days} /><span class="unit">Дней</span>`
              : html`<span class="fill"></span>`}
            ${this.swatches(s.colors)}
          </div>`)}
        <div class="row cmp"><label class="check"><input class="cb" type="checkbox" />Сравнить со стратегией</label></div>
        <div class="dropwrap strategy"><select class="drop" aria-label="Стратегия"><option></option></select></div>
        <fieldset class="group">
          <legend class="legend">Чего рисуем</legend>
          ${["Прибыль", "Дельта", "Гамма", "Вега", "Тета", "Вомма"].map((n, i) => html`
            <label class="radio"><input class="rb" type="radio" name="what" ?checked=${i === 0} />${n}</label>`)}
        </fieldset>
        <fieldset class="group limits">
          <legend class="legend">Отрисовка графика %</legend>
          ${["Выше", "Ниже"].map((n, i) => html`
            <div class="lim"><span class="limname">${n}</span>
              <button class=${classMap({ btn: true, arrow: true, hot: i === 1 })}>&lt;</button>
              <input class="txt ro" aria-label=${n} readonly value="10" />
              <button class="btn arrow">&gt;</button></div>`)}
        </fieldset>
        <label class="step y">Шаг сетки Y<input class="txt off" disabled value="1000" /></label>
        <div class="auto"><label class="check"><input class="cb" type="checkbox" checked />Авто</label><span class="autoval">5000</span></div>
        <label class="step x">Шаг сетки X<input class="txt ro" readonly value="250" /></label>
        <label class="step">Кол-во СКО<input class="txt" value="2" /></label>
        <label class="step">Кол-во дней<input class="txt" value="1" /></label>
      </div>`;
  }

  private spinner(v: string, label: string) {
    return html`<span class="spin"><input class="num" type="number" aria-label=${label} value=${v} /><span class="arrows"><button class="ar" aria-label="Больше"></button><button class="ar dn" aria-label="Меньше"></button></span></span>`;
  }

  private greek(name: string, cls: string, off = false) {
    return html`<label class="greek ${cls}">${name}<input class="txt ${off ? "off" : ""}" ?disabled=${off} value="0" /></label>`;
  }

  private table() {
    return html`
      <table class="table">
        <colgroup>${COLUMNS.map(([, w]) => html`<col style=${styleMap({ width: w ? `${w}px` : "auto" })} />`)}</colgroup>
        <thead><tr>${COLUMNS.map(([n]) => html`<th class="th" scope="col">${n}</th>`)}</tr></thead>
        <tbody>${ROWS.map((r, i) => html`<tr>
          <td class="td ${i === 0 ? "sel" : ""}"><input class="cb" type="checkbox" aria-label=${r[0]} checked /></td>
          ${r.map((c, j) => html`<td class=${classMap({ td: true, loss: j === 8 && c.startsWith("-"), gain: j === 8 && c !== "0" && !c.startsWith("-") })}>${c}</td>`)}
          <td class="td"><button class="btn del">X</button></td></tr>`)}
        </tbody>
      </table>`;
  }

  private mdi(title: string, spec: PriceSpec, thumb: string) {
    return html`
      <section class="mdi">
        <div class="mcap"><span class="mic"></span><span class="mname ui">${title}</span><caption-buttons kind="mdi"></caption-buttons></div>
        <price-chart .spec=${spec}></price-chart>
        <div class="scroll"><span class="thumb ${thumb}"><i class="rib"></i><i class="rib"></i><i class="rib"></i></span><span class="sar"></span></div>
      </section>`;
  }

  render() {
    return html`
      <div class="desktop">
        <main class="window">
          <header class="caption">
            <svg class="logo" viewBox="0 0 16 16"><rect x=".5" y=".5" width="15" height="15" fill="#fff" stroke="#2f9fe0" /><path d="M1 9l2-2 2 4 3-6 2 6 2-5 1 1 2-5" fill="none" stroke="#1f8fd6" stroke-width="1.500" /></svg>
            <h1 class="name ui">OptionFVV версия 2.1 public</h1>
            <caption-buttons kind="active"></caption-buttons>
          </header>
          <div class="client">
            <nav class="menu ui">
              ${["Файл", "Торговля", "Настройки", "Окно"].map((m) => html`<a class="mi" href="#">${m}</a>`)}
              <a class="mi push" href="#">О программе</a>
            </nav>
            <div class="tabs" role="tablist">
              ${TABS.map(([t, w], i) => html`<button role="tab" class=${classMap({ tab: true, on: i === 1 })} style=${styleMap({ width: `${w}px` })}>${t}</button>`)}
            </div>
            <div class="page">${this.sidebar()}<profit-chart></profit-chart></div>
            <div class="split"></div>
            <section class="folio">
              <div class="cap">Портфель</div>
              <div class="bar">
                <span class="dropwrap port"><select class="portsel" aria-label="Портфель"><option>Si HH 2</option></select></span>
                <button class="btn w53">Импорт</button><button class="btn w55">Удалить</button><button class="btn w70">Сохранить</button>
                <label class="check dh"><input class="cb" type="checkbox" disabled />DH</label>
                ${this.spinner("0", "DH 0")}${this.spinner("1", "DH 1")}
                <label class="check m"><input class="cb" type="checkbox" />M</label>
                ${this.greek("D", "g49")}${this.greek("V1", "g54")}${this.greek("V2", "g56", true)}${this.greek("P1", "g72")}
                <span>SiZ0 77610</span>
                ${this.greek("P2", "g83", true)}
                <button class="btn calc">Рассчитать ГО</button>
                <button class="btn min">_</button>
              </div>
              <div class="grid">${this.table()}</div>
            </section>
            <footer class="status ui"><span>Время обновления 45 мс  Profit=9348,8 Delta(Δ)=2,65 Gamma(Γ)=-0,000955 Vega=-107,96 Theta(Θ)=203,83</span><svg class="sizer" viewBox="0 0 10 10"><path d="M8 0h2v2H8zM4 4h2v2H4zM8 4h2v2H8zM0 8h2v2H0zM4 8h2v2H4zM8 8h2v2H8z" fill="#f6ead8" /></svg></footer>
          </div>
        </main>
        <section class="terminal">
          <div class="tcap"><caption-buttons kind="idle"></caption-buttons></div>
          <div class="strip"></div>
          <div class="tools">
            <span class="dropwrap acct"><select class="acctsel" aria-label="Счёт"><option></option></select></span>
            <button class="head" aria-label="Пользователь"><svg class="ico" viewBox="0 0 16 16"><path d="M3 9V3l2-2h5l2 2v2H8L7 9l-1 3H4z" fill="#000" /><path d="M8 5h4v2l1 2-1 1v2H9l-2-2V8z" fill="#fff" stroke="#000" /><path d="M2 16v-2l4-2 2 1 2-1 3 2v2z" fill="#2f9fd0" /></svg></button>
            <span class="grip"></span>
            <a class="banner" href="#">Америк<span class="b2">тепл</span></a>
          </div>
          <div class="strip2"></div>
          ${this.mdi("SiZ0 График цены и объёма - [4 часа]", SI, "t1")}
          ${this.mdi("RIZ0 График цены и объёма #8 - [4 часа]", RI, "t2")}
          <div class="foot"></div>
          <div class="tstat ui">
            <span class="seg void"></span>
            <span class="seg net"><svg class="ico" viewBox="0 0 16 16"><path d="M1 1h6v5H1zM1 10h6v4H1z" fill="#3fd0d8" stroke="#555" /><path d="M0 7h8v1H0zM0 15h8v1H0z" fill="#555" /><circle cx="12" cy="9" r="3" fill="#ffd" stroke="#222" /><path d="M9 15h6v-3" fill="none" stroke="#00f" /></svg>78.41.197.17:15100</span>
            <span class="seg void"></span><span class="seg void"></span><span class="seg void"></span>
            <span class="seg date net"><i class="dot"></i>13.11.2020</span>
          </div>
        </section>
      </div>
    `;
  }
}
